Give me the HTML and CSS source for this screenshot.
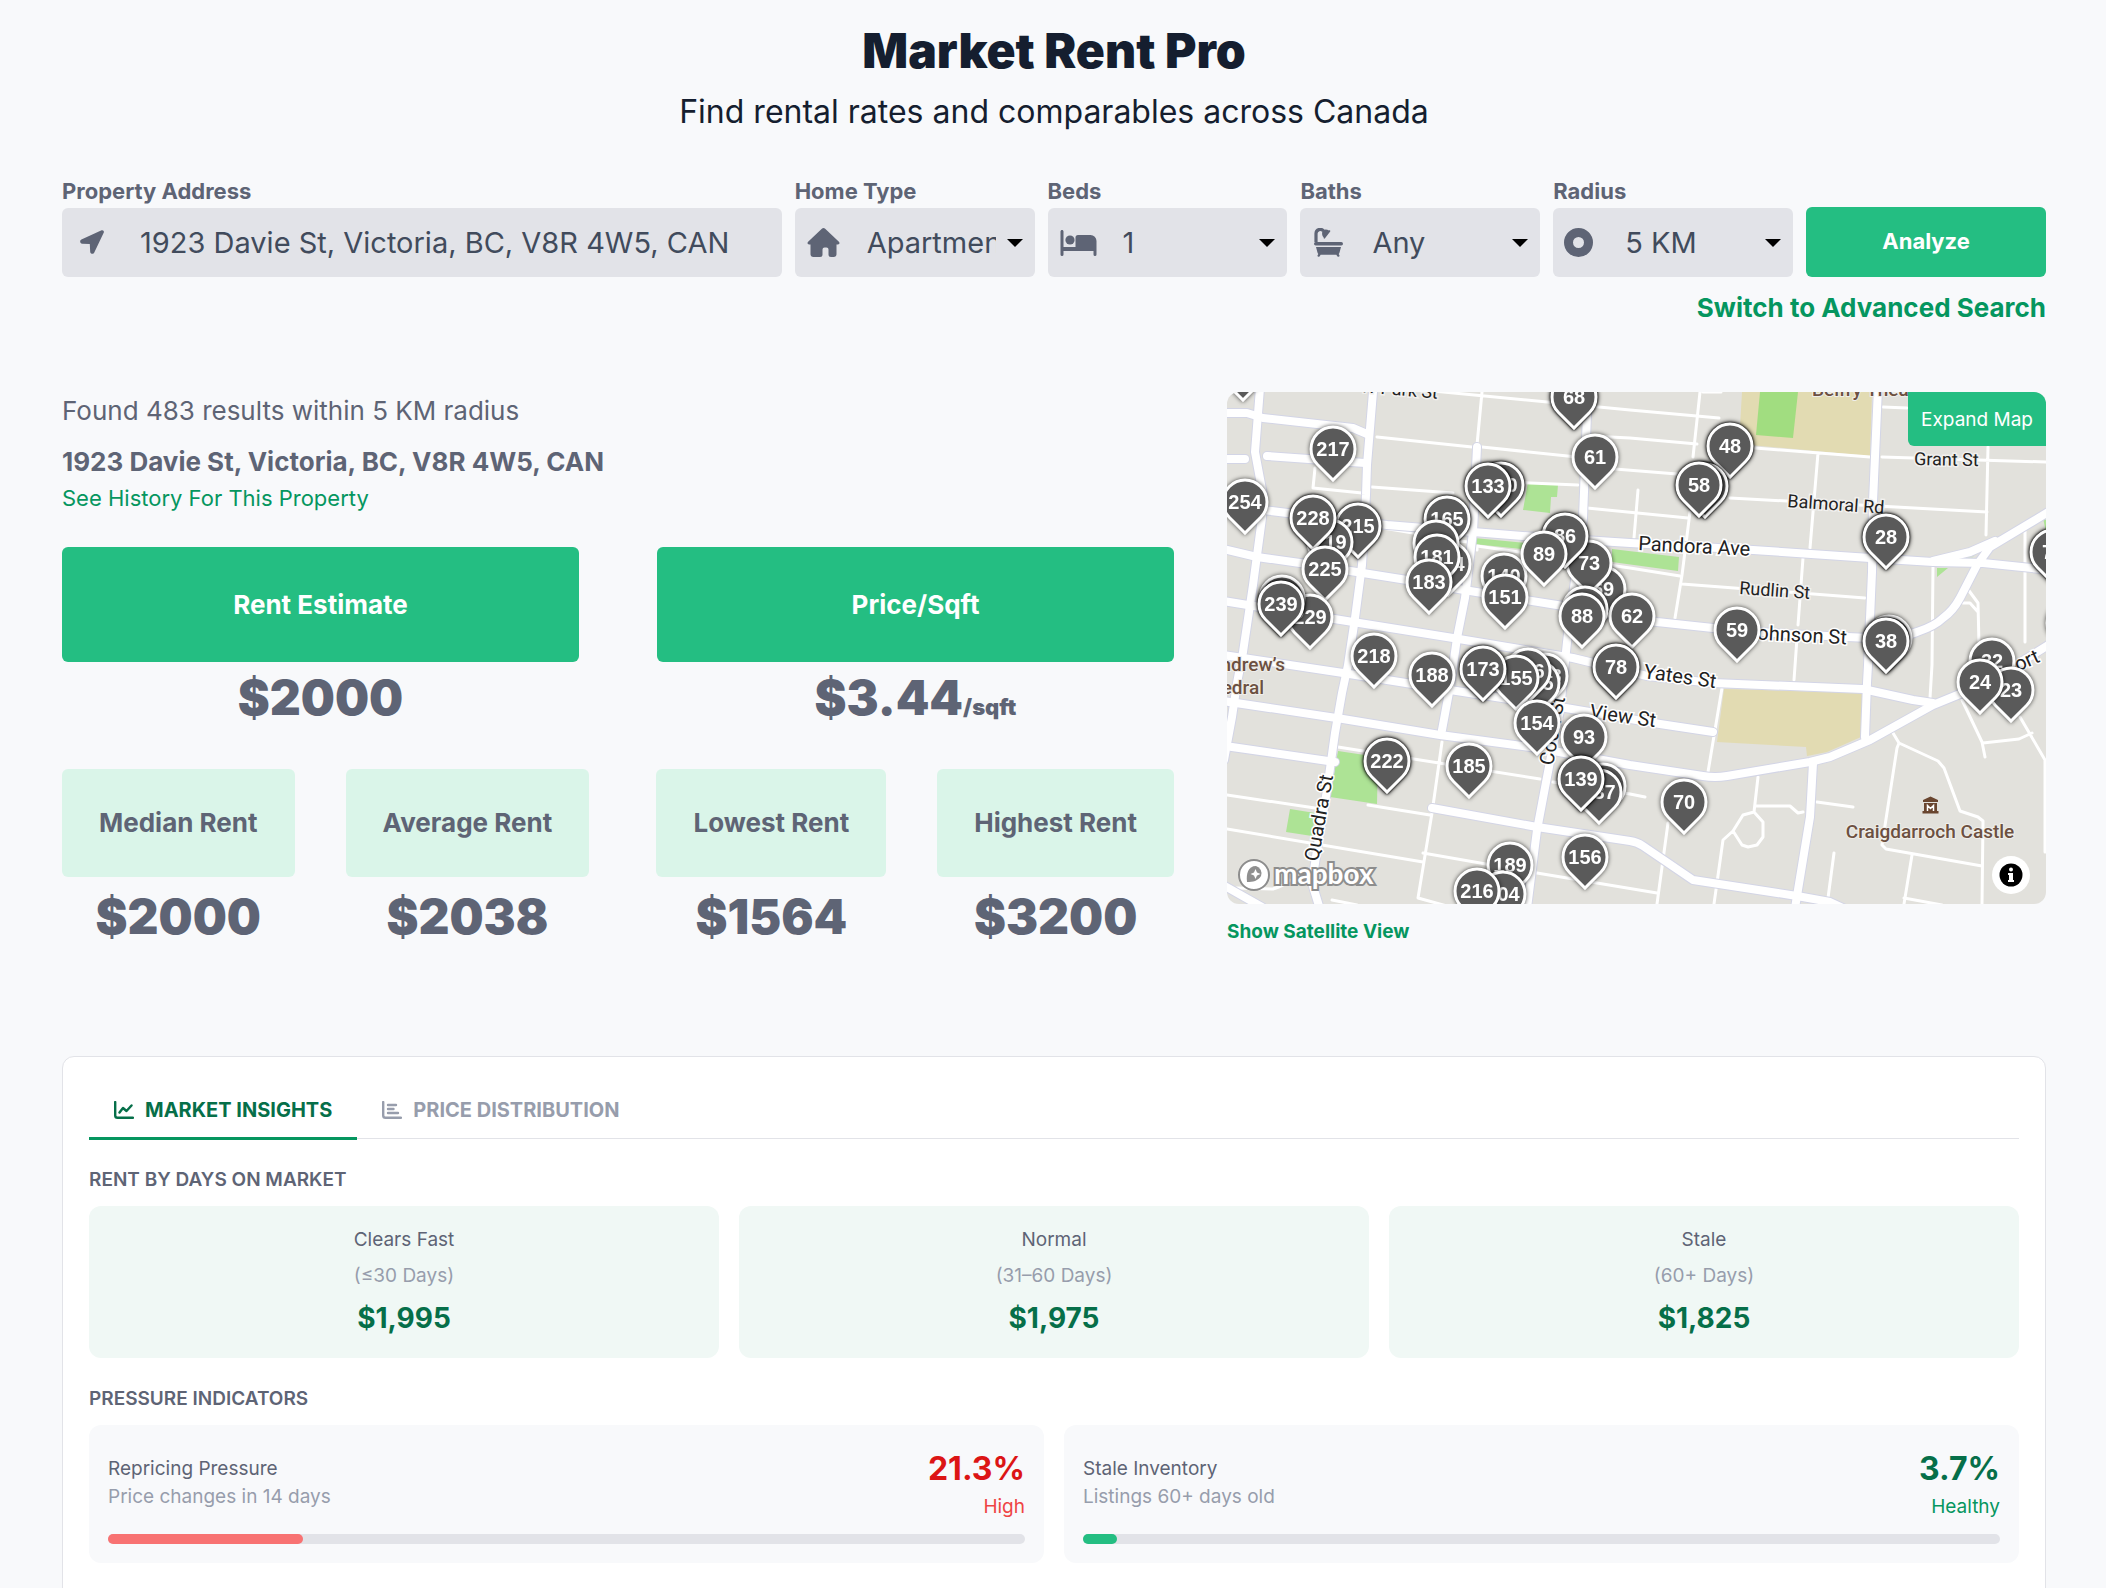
FILE: index.html
```html
<!DOCTYPE html>
<html lang="en">
<head>
<meta charset="utf-8">
<meta name="viewport" content="width=device-width, initial-scale=1">
<title>Market Rent Pro</title>
<link rel="stylesheet" href="styles.css">
</head>
<body>
<main class="page">
  <header class="hero">
    <h1 class="hero-title">Market Rent Pro</h1>
    <p class="hero-subtitle">Find rental rates and comparables across Canada</p>
  </header>

  <form class="search">
    <div class="field">
      <label class="field-label" for="address">Property Address</label>
      <div class="field-box">
        <svg class="field-icon icon-arrow" viewBox="0 0 24 24" aria-hidden="true"><path d="M21.6.3 1.4 9.6c-2 1-1.500 4 .8 4.100l7.600.3.4 7.700c.1 2.500 3.300 2.900 4.200.6L23.800 2.600C24.300.9 23-.3 21.600.3z"/></svg>
        <input class="control control-address" id="address" type="text" value="1923 Davie St, Victoria, BC, V8R 4W5, CAN">
      </div>
    </div>
    <div class="field">
      <label class="field-label" for="home-type">Home Type</label>
      <div class="field-box">
        <svg class="field-icon" viewBox="0 0 32 29" aria-hidden="true"><path d="M14.600.6c.8-.8 2-.8 2.800 0l14 13.200c1.200 1.200.5 2.700-1 2.700h-1.400v9.500a3 3 0 0 1-3 3h-2.500a2.500 2.500 0 0 1-2.500-2.500v-5a2 2 0 0 0-2-2h-2a2 2 0 0 0-2 2v5a2.500 2.500 0 0 1-2.500 2.500H6a3 3 0 0 1-3-3v-9.500H1.600c-1.500 0-2.200-1.500-1-2.700z"/></svg>
        <select class="control" id="home-type"><option>Apartment</option><option>House</option></select>
        <svg class="caret" viewBox="0 0 16 8" aria-hidden="true"><path d="M0 0h16L8 8z"/></svg>
      </div>
    </div>
    <div class="field">
      <label class="field-label" for="beds">Beds</label>
      <div class="field-box">
        <svg class="field-icon icon-bed" viewBox="0 0 36 26" aria-hidden="true"><path d="M1.500 0C2.400 0 3 .7 3 1.500V17h12V7.500A2.500 2.500 0 0 1 17.500 5H30a6 6 0 0 1 6 6v13.500a1.500 1.500 0 0 1-3 0V21H3v3.500a1.500 1.500 0 0 1-3 0v-23C0 .7.7 0 1.500 0z"/><circle cx="9.500" cy="10" r="4.600"/></svg>
        <select class="control control-beds" id="beds"><option>1</option><option>2</option></select>
        <svg class="caret" viewBox="0 0 16 8" aria-hidden="true"><path d="M0 0h16L8 8z"/></svg>
      </div>
    </div>
    <div class="field">
      <label class="field-label" for="baths">Baths</label>
      <div class="field-box">
        <svg class="field-icon icon-bath" viewBox="0 0 29 29" aria-hidden="true"><path d="M2 14V5.500A4.200 4.200 0 0 1 9.500 3" fill="none" stroke="currentColor" stroke-width="3.200"/><path d="M9 2.200c2-1 4.200-.8 6 .3.700-.6 1.800.3 1.200 1.100L11 10.300c-.6.800-1.700.100-1.300-.8C7.800 7.500 7.500 4.400 9 2.200z"/><rect x="0" y="14" width="29" height="3.400" rx="1.700"/><path d="M2 19h25l-1.400 5.200c-.2.800-.5 1.300-.9 1.700l.8 1.500c.4 1-1.700 1.800-2.300.8l-.8-1.500H6.600l-.8 1.500c-.6 1-2.700.2-2.300-.8l.8-1.500c-.4-.4-.7-1-.9-1.700z"/></svg>
        <select class="control" id="baths"><option>Any</option><option>1</option></select>
        <svg class="caret" viewBox="0 0 16 8" aria-hidden="true"><path d="M0 0h16L8 8z"/></svg>
      </div>
    </div>
    <div class="field">
      <label class="field-label" for="radius">Radius</label>
      <div class="field-box">
        <svg class="field-icon icon-radius" viewBox="0 0 29 29" aria-hidden="true"><circle cx="14.500" cy="14.500" r="10" fill="none" stroke="currentColor" stroke-width="9"/></svg>
        <select class="control" id="radius"><option>5 KM</option><option>10 KM</option></select>
        <svg class="caret" viewBox="0 0 16 8" aria-hidden="true"><path d="M0 0h16L8 8z"/></svg>
      </div>
    </div>
    <button class="analyze" type="button">Analyze</button>
  </form>
  <div class="search-mode"><a class="link-strong" href="#advanced">Switch to Advanced Search</a></div>

  <section class="results">
    <div class="summary">
      <p class="found">Found 483 results within 5 KM radius</p>
      <h2 class="address">1923 Davie St, Victoria, BC, V8R 4W5, CAN</h2>
      <a class="history" href="#history">See History For This Property</a>
      <div class="headline-stats">
        <div class="stat"><div class="stat-name stat-primary">Rent Estimate</div><div class="stat-value">$2000</div></div>
        <div class="stat"><div class="stat-name stat-primary">Price/Sqft</div><div class="stat-value">$3.44<span class="unit">/sqft</span></div></div>
      </div>
      <div class="range-stats">
        <div class="range-pair">
          <div class="range"><div class="stat-name stat-soft">Median Rent</div><div class="stat-value">$2000</div></div>
          <div class="range"><div class="stat-name stat-soft">Average Rent</div><div class="stat-value">$2038</div></div>
        </div>
        <div class="range-pair">
          <div class="range"><div class="stat-name stat-soft">Lowest Rent</div><div class="stat-value">$1564</div></div>
          <div class="range"><div class="stat-name stat-soft">Highest Rent</div><div class="stat-value">$3200</div></div>
        </div>
      </div>
    </div>

    <div class="map-column">
      <div class="map">
        <svg class="map-canvas" viewBox="0 0 819 512" preserveAspectRatio="xMidYMid slice" role="img" aria-label="Map of comparable rentals">
          <defs>
            <path id="pin" d="M-15.560 15.560A22 22 0 1 1 15.560 15.560L0 31.100Z"/>
            <g id="major">
              <path d="M146 0 140 73 139 103 135 173 128 226 121 273 115 301 108 341 100 398 90 458 85 491 92 514"/>
              <path d="M33-4 28 60 36 103 35 126 26 193 16 260 10 291 5 325-3 368"/>
              <path d="M-4 21H20L36 26 126 36 140 42"/>
              <path d="M-4 67H18"/><path d="M40 64 138 71"/>
              <path d="M36 118 160 133 246 140 310 145 403 151 526 158 643 166 706 170 756 171 823 178"/>
              <path d="M-4 157 30 165 73 171 180 188 243 199 330 213 430 230 486 236 560 242 620 245 643 246Q675 246 690 240 708 234 716 226 726 219 733 206L750 173 763 155 823 119"/>
              <path d="M706 169 743 160 768 149"/>
              <path d="M-4 209 33 215 126 230 226 246 346 266 420 284 486 291 636 297 686 308 706 311"/>
              <path d="M-4 263 116 281 223 298 333 315 433 332 486 340"/>
              <path d="M-4 309 116 327 213 343 310 356 403 373 476 384Q488 386 500 384L583 370 603 365 643 348 706 313 750 295 786 275 823 252"/>
              <path d="M5 355 108 370"/>
              <path d="M205 416 310 435 403 449Q410 450 416 454L466 488 570 504 603 510 620 518"/>
              <path d="M361-4 356 126 340 250 333 318 320 385 310 438 300 516"/>
              <path d="M250 55 246 140 238 206 230 246 223 295 215 338"/>
              <path d="M651-4 646 110 645 180 641 273 640 291 638 345"/>
              <path d="M586 371 583 425 568 516"/>
              <path d="M-4 493 35 515"/>
            </g>
          </defs>
          <rect width="819" height="512" fill="#e2e1dc"/>
          <path fill="#e2dbb2" d="M515 0H645L643 64 512 52ZM497 297 636 301 634 345 600 360 580 364 579 355 490 350Z"/>
          <path fill="#a1dd80" d="M533 0H571L566 46 529 43Z"/>
          <path fill="#ade395" d="M301 90 331 93 330 105H324L323 121 296 118ZM247 146 340 155V162L247 152ZM385 157 452 165 451 179 385 170ZM111 359 151 365 150 412 103 405ZM63 417 88 421 85 444 59 440ZM710 176H721L710 185ZM816 126 819 128V140Z"/>
          <path fill="#d5e0cf" d="M728 166 750 160 744 168Z"/>
          <g fill="none" stroke="#fff" stroke-width="3" stroke-linecap="round" stroke-linejoin="round">
            <path d="M150 45 245 55M255 55 350 65M255 0 250 53M206-1 403 18 492 26M145 95 226 101M276 90 351 93M363 44 403 46 470 52M363 75 450 82M360 116 461 126M88 76 86 96 135 101M156 136 240 150M250 158V154L403 176 453 184"/>
            <path d="M473 0 466 65M463 120 455 183 448 226M411 98 407 146M528 56 643 65M591 61 583 156M576 166 571 233M570 246 567 288M503 106 760 120M455 192 638 206M656 15 680 16M655 65 819 70M761 55 759 143M706 175 705 273 703 306M798 136V250M740 196 751 211 752 253M736 211H743L751 220M476 0H494"/>
            <path d="M111 355 313 387M326 390 403 402 418 405M0 403 88 416M141 413 203 423M0 437 196 470M196 461 310 481 430 501M105 508 130 513M10 496 46 497Q56 494 63 488M215 350 205 421 191 506 220 514"/>
            <path d="M495 296 481 380M531 385 527 420M527 420 536 430V445L530 453 521 455 515 453 506 439 516 423ZM506 439 496 448 487 512M528 414H563L571 421 576 420M590 410 626 415M441 431 430 512M607 461 601 506M666 341 672 351 711 369 717 376 733 419 751 425 756 429 755 512M672 351 670 356 655 453 659 457 755 474M685 463 677 512M677 506 715 513M735 308 755 350 758 365M756 351 792 347 805 341M793 325 818 368V460"/>
          </g>
          <g fill="none" stroke-linecap="round" stroke-linejoin="round">
            <use href="#major" stroke="#d3d5e6" stroke-width="10"/>
            <use href="#major" stroke="#fff" stroke-width="8"/>
          </g>
          <g class="street">
            <text transform="translate(133 0) rotate(5)">W Park St</text>
            <text transform="translate(687 73) rotate(1)">Grant St</text>
            <text transform="translate(560 115) rotate(4)">Balmoral Rd</text>
            <text class="street-main" transform="translate(411 158) rotate(3)">Pandora Ave</text>
            <text transform="translate(512 202) rotate(4)">Rudlin St</text>
            <text class="street-main" transform="translate(519 247) rotate(3)">Johnson St</text>
            <text class="street-main" transform="translate(416 286) rotate(8)">Yates St</text>
            <text class="street-main" transform="translate(362 326) rotate(8)">View St</text>
            <text class="street-main" transform="translate(91 470) rotate(-80)">Quadra St</text>
            <text class="street-main" transform="translate(326 374) rotate(-80)">Cook St</text>
            <text class="street-main" transform="translate(781 284) rotate(-24)">Fort</text>
          </g>
          <g class="poi">
            <text x="585" y="4">Belfry Theatre</text>
            <text x="58" y="279" text-anchor="end">St. Andrew’s</text>
            <text x="37" y="302" text-anchor="end">Cathedral</text>
            <text x="703" y="446" text-anchor="middle">Craigdarroch Castle</text>
            <path d="M696 410V408L703.500 404.500 711 408V410ZM697 411H710V419H711.500V421.500H695.500V419H697Z"/>
            <path d="M700.500 419V413.500L703.500 416.500 706.500 413.500V419" fill="none" stroke="#fff" stroke-width="1.500"/>
          </g>
          <g class="pins">
            <g transform="translate(16 -23)"><use href="#pin"/></g>
            <g transform="translate(106 57)"><use href="#pin"/><text y="7">217</text></g>
            <g class="stacked" transform="translate(347 5)"><use href="#pin"/><text y="7">68</text></g>
            <g transform="translate(368 65)"><use href="#pin"/><text y="7">61</text></g>
            <g transform="translate(18 110)"><use href="#pin"/><text y="7">254</text></g>
            <g class="stacked" transform="translate(131 134)"><use href="#pin"/><text y="7">215</text></g>
            <g transform="translate(103 150)"><use href="#pin"/><text y="7">219</text></g>
            <g class="stacked" transform="translate(86 126)"><use href="#pin"/><text y="7">228</text></g>
            <g transform="translate(98 177)"><use href="#pin"/><text y="7">225</text></g>
            <g transform="translate(83 225)"><use href="#pin"/><text y="7">229</text></g>
            <g transform="translate(55 206)"><use href="#pin"/></g>
            <g class="stacked" transform="translate(54 212)"><use href="#pin"/><text y="7">239</text></g>
            <g class="stacked" transform="translate(274 93)"><use href="#pin"/><text y="7">130</text></g>
            <g class="stacked" transform="translate(261 94)"><use href="#pin"/><text y="7">133</text></g>
            <g class="stacked" transform="translate(220 127)"><use href="#pin"/><text y="7">165</text></g>
            <g transform="translate(221 172)"><use href="#pin"/><text y="7">184</text></g>
            <g transform="translate(209 151)"><use href="#pin"/></g>
            <g transform="translate(210 165)"><use href="#pin"/><text y="7">181</text></g>
            <g transform="translate(202 190)"><use href="#pin"/><text y="7">183</text></g>
            <g transform="translate(277 184)"><use href="#pin"/><text y="7">140</text></g>
            <g transform="translate(278 205)"><use href="#pin"/><text y="7">151</text></g>
            <g transform="translate(376 197)"><use href="#pin"/><text y="7">69</text></g>
            <g transform="translate(362 171)"><use href="#pin"/><text y="7">73</text></g>
            <g class="stacked" transform="translate(338 144)"><use href="#pin"/><text y="7">86</text></g>
            <g transform="translate(317 162)"><use href="#pin"/><text y="7">89</text></g>
            <g transform="translate(405 224)"><use href="#pin"/><text y="7">62</text></g>
            <g transform="translate(358 217)"><use href="#pin"/></g>
            <g transform="translate(355 224)"><use href="#pin"/><text y="7">88</text></g>
            <g transform="translate(147 264)"><use href="#pin"/><text y="7">218</text></g>
            <g transform="translate(205 283)"><use href="#pin"/><text y="7">188</text></g>
            <g transform="translate(318 284)"><use href="#pin"/><text y="7">148</text></g>
            <g transform="translate(310 291)"><use href="#pin"/><text y="7">145</text></g>
            <g transform="translate(301 279)"><use href="#pin"/><text y="7">146</text></g>
            <g transform="translate(289 286)"><use href="#pin"/><text y="7">155</text></g>
            <g class="stacked" transform="translate(256 277)"><use href="#pin"/><text y="7">173</text></g>
            <g class="stacked" transform="translate(389 275)"><use href="#pin"/><text y="7">78</text></g>
            <g transform="translate(310 331)"><use href="#pin"/><text y="7">154</text></g>
            <g transform="translate(357 345)"><use href="#pin"/><text y="7">93</text></g>
            <g class="stacked" transform="translate(160 369)"><use href="#pin"/><text y="7">222</text></g>
            <g transform="translate(242 374)"><use href="#pin"/><text y="7">185</text></g>
            <g transform="translate(376 394)"><use href="#pin"/></g>
            <g transform="translate(372 400)"><use href="#pin"/><text y="7">137</text></g>
            <g class="stacked" transform="translate(354 387)"><use href="#pin"/><text y="7">139</text></g>
            <g transform="translate(283 473)"><use href="#pin"/><text y="7">189</text></g>
            <g transform="translate(276 502)"><use href="#pin"/><text y="7">204</text></g>
            <g transform="translate(250 499)"><use href="#pin"/><text y="7">216</text></g>
            <g transform="translate(358 465)"><use href="#pin"/><text y="7">156</text></g>
            <g class="stacked" transform="translate(503 54)"><use href="#pin"/><text y="7">48</text></g>
            <g class="stacked" transform="translate(478 94)"><use href="#pin"/></g>
            <g class="stacked" transform="translate(472 93)"><use href="#pin"/><text y="7">58</text></g>
            <g class="stacked" transform="translate(659 145)"><use href="#pin"/><text y="7">28</text></g>
            <g transform="translate(662 246)"><use href="#pin"/></g>
            <g class="stacked" transform="translate(659 249)"><use href="#pin"/><text y="7">38</text></g>
            <g transform="translate(510 238)"><use href="#pin"/><text y="7">59</text></g>
            <g class="stacked" transform="translate(826 160)"><use href="#pin"/><text y="7">72</text></g>
            <g transform="translate(842 231)"><use href="#pin"/></g>
            <g transform="translate(765 269)"><use href="#pin"/><text y="7">32</text></g>
            <g transform="translate(784 298)"><use href="#pin"/><text y="7">23</text></g>
            <g transform="translate(753 290)"><use href="#pin"/><text y="7">24</text></g>
            <g transform="translate(457 410)"><use href="#pin"/><text y="7">70</text></g>
          </g>
          <g class="brand">
            <circle cx="27" cy="483" r="15" fill="#fff" stroke="#8d8d8d" stroke-width="2"/>
            <path d="M20 490C19 482 21 474 29 474A7.500 7.500 0 0 1 34 484C31 489 26 490 20 490Z" fill="#8f8f8f"/>
            <path d="M28.500 477 30 480.500 33.500 482 30 483.500 28.500 487 27 483.500 23.500 482 27 480.500Z" fill="#fff"/>
            <text x="47" y="492">mapbox</text>
          </g>
        </svg>
        <button class="expand" type="button">Expand Map</button>
        <button class="info" type="button" aria-label="Map attribution"><svg class="info-icon" viewBox="0 0 24 24" aria-hidden="true"><circle cx="12" cy="12" r="11.500"/><circle cx="12" cy="6.500" r="2" fill="#fff"/><path d="M9 10H14V17H15V19H9V17H10V12H9Z" fill="#fff"/></svg></button>
      </div>
      <a class="satellite" href="#satellite">Show Satellite View</a>
    </div>
  </section>

  <section class="insights">
    <div class="tabs" role="tablist">
      <button class="tab tab-active" type="button" role="tab" aria-selected="true"><svg class="tab-icon" viewBox="0 0 20 18" aria-hidden="true"><path d="M1.200 1V14.500A2.300 2.300 0 0 0 3.500 16.800H19M5.500 11.500 9 7 12.500 10 17.500 4.500"/></svg>MARKET INSIGHTS</button>
      <button class="tab" type="button" role="tab" aria-selected="false"><svg class="tab-icon" viewBox="0 0 20 18" aria-hidden="true"><path d="M1.200 1V14.500A2.300 2.300 0 0 0 3.500 16.800H19M6 4H14M6 8H11.500M6 12H16"/></svg>PRICE DISTRIBUTION</button>
    </div>
    <h3 class="block-title">RENT BY DAYS ON MARKET</h3>
    <div class="days">
      <div class="day-card"><div class="name">Clears Fast</div><div class="note">(≤30 Days)</div><div class="day-price">$1,995</div></div>
      <div class="day-card"><div class="name">Normal</div><div class="note">(31–60 Days)</div><div class="day-price">$1,975</div></div>
      <div class="day-card"><div class="name">Stale</div><div class="note">(60+ Days)</div><div class="day-price">$1,825</div></div>
    </div>
    <h3 class="block-title">PRESSURE INDICATORS</h3>
    <div class="pressures">
      <div class="pressure-card">
        <div class="pressure-row">
          <div class="pressure-text"><div class="name">Repricing Pressure</div><div class="note">Price changes in 14 days</div></div>
          <div class="pressure-figure high"><div class="percent">21.3%</div><div class="level">High</div></div>
        </div>
        <div class="bar"><div class="bar-fill bar-high" style="width:21.3%"></div></div>
      </div>
      <div class="pressure-card">
        <div class="pressure-row">
          <div class="pressure-text"><div class="name">Stale Inventory</div><div class="note">Listings 60+ days old</div></div>
          <div class="pressure-figure healthy"><div class="percent">3.7%</div><div class="level">Healthy</div></div>
        </div>
        <div class="bar"><div class="bar-fill bar-healthy" style="width:3.7%"></div></div>
      </div>
    </div>
  </section>
</main>
</body>
</html>
```
FILE: styles.css
```css
:root {
  --ink: #151e2f;
  --slate: #5e6475;
  --muted: #979dac;
  --line: #e2e3e8;
  --green: #24be82;
  --green-link: #05965f;
  --green-dark: #066f49;
  --surface: #f8f9fb;
}

* { box-sizing: border-box; }

body {
  margin: 0;
  background: var(--surface);
  color: var(--slate);
  font-family: Inter, "Liberation Sans", sans-serif;
}

h1, h2, h3, p { margin: 0; }
a { text-decoration: none; }
button, input, select { font-family: inherit; margin: 0; border: 0; }
button { cursor: pointer; }

.page { padding: 23px 60px 0 62px; }

/* Heading */
.hero { text-align: center; color: var(--ink); }
.hero-title { font-size: 48px; line-height: 56px; font-weight: 900; }
.hero-subtitle { margin-top: 13px; font-size: 32px; line-height: 40px; }

/* Search form */
.search {
  display: grid;
  grid-template-columns: 3fr repeat(5, 1fr);
  gap: 13px;
  align-items: end;
  margin-top: 45px;
}
.field { min-width: 0; }
.field-label { display: block; margin-bottom: 3px; font-size: 22px; line-height: 28px; font-weight: 700; }
.field-box { position: relative; }
.field-icon {
  position: absolute;
  left: 12px;
  top: 20px;
  width: 33px;
  height: 29px;
  fill: currentColor;
  pointer-events: none;
}
.icon-arrow { left: 18px; top: 22px; width: 24px; height: 24px; }
.icon-bed { width: 37px; height: 26px; top: 22px; }
.icon-bath { left: 14px; width: 29px; }
.icon-radius { left: 11px; width: 29px; }
.control {
  display: block;
  width: 100%;
  height: 69px;
  padding: 0 39px 0 72px;
  border-radius: 6px;
  background: var(--line);
  color: #414b5c;
  font-size: 29px;
  appearance: none;
}
.control-address { padding: 0 20px 0 78px; }
.control-beds { padding-left: 75px; }
.caret { position: absolute; right: 12px; top: 31px; width: 16px; height: 8px; pointer-events: none; }
.analyze {
  height: 70px;
  padding-bottom: 3px;
  border-radius: 6px;
  background: var(--green);
  color: #fff;
  font-size: 22px;
  font-weight: 700;
}
.search-mode { margin-top: 15px; text-align: right; font-size: 26px; line-height: 32px; }
.link-strong { color: var(--green-link); font-weight: 700; }

/* Results */
.results {
  display: grid;
  grid-template-columns: 1112fr 819fr;
  gap: 53px;
  margin-top: 68px;
}
.summary { min-width: 0; }
.found { font-size: 26px; line-height: 38px; }
.address { margin-top: 16px; font-size: 26px; line-height: 32px; font-weight: 700; }
.history { display: block; margin-top: 6px; color: var(--green-link); font-size: 22px; line-height: 28px; }
.headline-stats { display: grid; grid-template-columns: 1fr 1fr; gap: 78px; margin-top: 35px; }
.stat-name {
  display: flex;
  align-items: center;
  justify-content: center;
  border-radius: 6px;
  font-size: 26px;
  line-height: 32px;
  font-weight: 700;
}
.stat-primary { height: 115px; background: var(--green); color: #fff; }
.stat-soft { height: 108px; padding: 0 37px; background: #daf5e9; }
.stat-value { margin-top: 8px; text-align: center; font-size: 48px; line-height: 56px; font-weight: 900; }
.unit { font-size: 22px; line-height: 24px; }
.range-stats { display: flex; justify-content: space-between; margin-top: 43px; }
.range-pair { display: flex; gap: 51px; }
.range .stat-value { margin-top: 12px; }

/* Map */
.map { position: relative; height: 512px; border-radius: 12px; overflow: hidden; }
.map-canvas { display: block; width: 100%; height: 100%; }
.street text {
  font-family: Roboto, "Liberation Sans", sans-serif;
  font-size: 18px;
  fill: #222;
  stroke: #f1f0ee;
  stroke-width: 3px;
  paint-order: stroke;
}
.street .street-main { font-size: 20px; stroke: #fff; }
.poi { fill: #69452f; }
.poi text {
  font-family: Roboto, "Liberation Sans", sans-serif;
  font-size: 19px;
  font-weight: 500;
  fill: #6c5041;
  stroke: #efeeea;
  stroke-width: 2px;
  paint-order: stroke;
}
.pins use { fill: #5a5a5a; stroke: #fff; stroke-width: 3px; }
.pins g { filter: drop-shadow(0 0 2px rgb(0 0 0 / 70%)); }
.pins .stacked { filter: drop-shadow(0 0 1px #000) drop-shadow(0 0 2px #000); }
.pins text {
  font-family: "Liberation Sans", Arial, sans-serif;
  font-size: 20px;
  font-weight: 700;
  text-anchor: middle;
  fill: #fff;
}
.brand text {
  font-family: Lato, sans-serif;
  font-size: 28px;
  font-weight: 700;
  fill: #fff;
  stroke: #8d8d8d;
  stroke-width: 4px;
  paint-order: stroke;
}
.expand {
  position: absolute;
  top: 0;
  right: 0;
  height: 54px;
  padding: 0 13px;
  border-radius: 0 0 0 6px;
  background: var(--green);
  color: #fff;
  font-size: 19px;
}
.info {
  position: absolute;
  right: 16px;
  bottom: 10px;
  display: grid;
  place-items: center;
  width: 38px;
  height: 38px;
  padding: 0;
  border-radius: 50%;
  background: #fff;
}
.info-icon { width: 24px; height: 24px; }
.satellite {
  display: inline-block;
  margin-top: 16px;
  color: var(--green-link);
  font-size: 19px;
  line-height: 24px;
  font-weight: 700;
}

/* Insights panel */
.insights {
  margin-top: 111px;
  padding: 26px 26px 48px;
  border: 1px solid var(--line);
  border-radius: 12px;
  background: #fff;
}
.tabs { display: flex; border-bottom: 1px solid var(--line); }
.tab {
  display: flex;
  align-items: center;
  gap: 11px;
  height: 57px;
  margin-bottom: -2px;
  padding: 0 25px;
  border-bottom: 3px solid transparent;
  background: none;
  color: var(--muted);
  font-size: 20px;
  font-weight: 700;
}
.tab-active { border-bottom-color: var(--green-link); color: var(--green-dark); }
.tab-icon {
  width: 20px;
  height: 18px;
  fill: none;
  stroke: currentColor;
  stroke-width: 2.400px;
  stroke-linecap: round;
  stroke-linejoin: round;
}
.block-title { margin: 29px 0 14px; font-size: 19px; line-height: 24px; font-weight: 600; }
.days { display: grid; grid-template-columns: repeat(3, 1fr); gap: 20px; }
.day-card { padding: 20px 19px 22px; border-radius: 12px; background: #f0f8f5; text-align: center; }
.name, .note { font-size: 19px; line-height: 28px; }
.note { color: var(--muted); }
.day-card .note { margin-top: 8px; }
.day-price { margin-top: 10px; color: var(--green-dark); font-size: 28px; line-height: 36px; font-weight: 700; }
.pressures { display: grid; grid-template-columns: 1fr 1fr; gap: 20px; }
.pressure-card { padding: 20px 19px 19px; border-radius: 12px; background: var(--surface); }
.pressure-row { display: flex; align-items: center; justify-content: space-between; }
.pressure-figure { text-align: right; }
.percent { font-size: 32px; line-height: 48px; font-weight: 700; }
.level { font-size: 19px; line-height: 28px; }
.high .percent { color: #dc1515; }
.high .level { color: #ef4444; }
.healthy .percent { color: var(--green-dark); }
.healthy .level { color: var(--green-link); }
.bar { height: 10px; margin-top: 13px; border-radius: 5px; background: var(--line); }
.bar-fill { height: 100%; border-radius: 5px; }
.bar-high { background: #f87272; }
.bar-healthy { background: var(--green); }
```
